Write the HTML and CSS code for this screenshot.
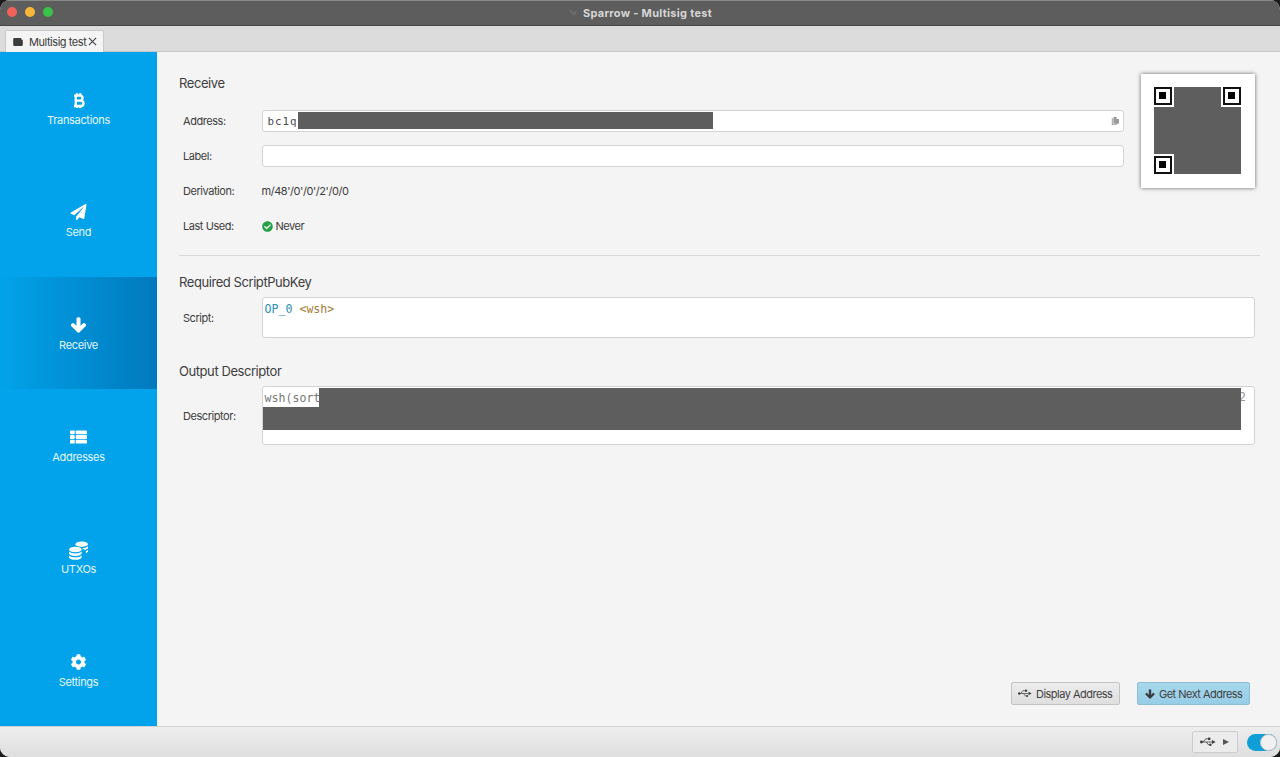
FILE: index.html
```html
<!DOCTYPE html>
<html lang="en">
<head>
<meta charset="utf-8">
<title>Sparrow - Multisig test</title>
<link rel="stylesheet" href="styles.css">
</head>
<body>
<div class="window">
  <header class="titlebar">
    <div class="lights"><span class="light red"></span><span class="light yellow"></span><span class="light green"></span></div>
    <div class="title">
      <svg class="title-icon" viewBox="0 0 12 10"><path d="M0 1l5 2 1 3 5-5-3 8-3-2z"/></svg>
      <span>Sparrow - Multisig test</span>
    </div>
  </header>
  <div class="tabbar">
    <div class="tab">
      <svg class="tab-icon" viewBox="0 0 12 10"><path d="M1.5 0H10v2h.5A1.5 1.5 0 0 1 12 3.500V8.500A1.500 1.500 0 0 1 10.500 10H1.500A1.500 1.500 0 0 1 0 8.500V1.500A1.500 1.500 0 0 1 1.500 0z"/></svg>
      <span>Multisig test</span>
      <svg class="tab-close" viewBox="0 0 10 10"><path d="M1 1l8 8M9 1l-8 8"/></svg>
    </div>
  </div>
  <div class="body">
    <nav class="sidebar">
      <div class="nav-item">
        <svg class="nav-icon" viewBox="1 -0.800 14 16"><path class="btc" d="M3.500 2.800H9.500a2.500 2.500 0 0 1 0 5H5M5 7.800H10.300a2.700 2.700 0 0 1 0 5.400H3.500M5.300 2.800V13.200M6.500 .5V3M9.800 .5V3M6.500 13V15.500M9.800 13V15.500"/></svg>
        <span>Transactions</span>
      </div>
      <div class="nav-item">
        <svg class="nav-icon" viewBox="0 0 512 512"><path d="M476 3.200L12.500 270.600c-18.100 10.400-15.800 35.600 2.200 43.200L121 358.400l287.300-253.200c5.500-4.900 13.300 2.600 8.600 8.300L176 407v80.500c0 23.600 28.500 32.900 42.500 15.800L282 426l124.600 52.200c14.200 6 30.400-2.900 33-18.200l72-432C515 7.800 493.300-6.800 476 3.200z"/></svg>
        <span>Send</span>
      </div>
      <div class="nav-item active">
        <svg class="nav-icon nav-arrow" viewBox="0 0 448 512"><path d="M413.100 222.500l22.200 22.200c9.400 9.400 9.400 24.600 0 33.900L241 473c-9.400 9.400-24.600 9.400-33.900 0L12.700 278.600c-9.400-9.400-9.400-24.600 0-33.900l22.200-22.200c9.500-9.500 25-9.300 34.300.4L184 343.400V56c0-13.300 10.700-24 24-24h32c13.300 0 24 10.700 24 24v287.400l114.800-120.500c9.300-9.800 24.800-10 34.300-.4z"/></svg>
        <span>Receive</span>
      </div>
      <div class="nav-item">
        <svg class="nav-icon" viewBox="0 0 18 16"><rect x="0" y="1" width="5" height="4" rx="1"/><rect x="0" y="6" width="5" height="4" rx="1"/><rect x="0" y="11" width="5" height="4" rx="1"/><rect x="6" y="1" width="12" height="4" rx="1"/><rect x="6" y="6" width="12" height="4" rx="1"/><rect x="6" y="11" width="12" height="4" rx="1"/></svg>
        <span>Addresses</span>
      </div>
      <div class="nav-item">
        <svg class="nav-icon nav-coins" viewBox="0 0 18 18"><ellipse cx="12" cy="3" rx="6" ry="2.600"/><path d="M6.500 5.600c1.500 1 3.500 1.200 5.500 1.200 2.500 0 4.800-.6 6-1.800v1.500c0 .9-1.200 1.700-3 2.200-.7-1.500-3.800-2.700-8.500-2.300zM16 9.600c.9-.3 1.600-.8 2-1.300v1.500c0 .7-.8 1.400-2 1.800z"/><ellipse cx="6" cy="8" rx="6" ry="2.600"/><path d="M0 10c1.200 1.200 3.500 1.900 6 1.900s4.800-.7 6-1.900v1.600c0 1.400-2.700 2.600-6 2.600s-6-1.200-6-2.600zM0 13.700c1.200 1.200 3.500 1.800 6 1.800s4.800-.6 6-1.800v1.600c0 1.400-2.700 2.500-6 2.500s-6-1.100-6-2.500z"/></svg>
        <span>UTXOs</span>
      </div>
      <div class="nav-item">
        <svg class="nav-icon" viewBox="0 0 512 512"><path d="M487.400 315.700l-42.600-24.600c4.300-23.200 4.300-47 0-70.200l42.600-24.600c4.900-2.800 7.100-8.600 5.500-14-11.100-35.600-30-67.800-54.700-94.600-3.800-4.100-10-5.100-14.800-2.300L380.800 110c-17.900-15.400-38.500-27.300-60.800-35.100V25.800c0-5.600-3.900-10.500-9.400-11.700-36.700-8.200-74.300-7.800-109.200 0-5.500 1.200-9.400 6.100-9.400 11.700V75c-22.200 7.900-42.800 19.800-60.800 35.100L88.700 85.500c-4.900-2.800-11-1.900-14.800 2.300-24.700 26.700-43.600 58.900-54.700 94.600-1.700 5.400.6 11.200 5.500 14L67.300 221c-4.300 23.200-4.300 47 0 70.200l-42.600 24.600c-4.900 2.800-7.100 8.600-5.500 14 11.100 35.600 30 67.800 54.700 94.600 3.800 4.100 10 5.100 14.800 2.300l42.600-24.600c17.900 15.400 38.500 27.300 60.800 35.100v49.200c0 5.600 3.900 10.500 9.400 11.700 36.700 8.200 74.300 7.800 109.200 0 5.500-1.200 9.400-6.100 9.400-11.700v-49.200c22.200-7.900 42.800-19.800 60.800-35.100l42.600 24.600c4.900 2.800 11 1.900 14.800-2.300 24.700-26.700 43.600-58.900 54.700-94.600 1.500-5.500-.7-11.300-5.600-14.100zM256 336c-44.100 0-80-35.900-80-80s35.900-80 80-80 80 35.900 80 80-35.900 80-80 80z"/></svg>
        <span>Settings</span>
      </div>
    </nav>
    <main class="content">
      <section class="top">
        <div class="top-form">
          <h2 class="heading">Receive</h2>
          <div class="row">
            <label class="row-label">Address:</label>
            <div class="field mono address">
              <span>bc1q</span>
              <span class="redact redact-address"></span>
              <svg class="copy-icon" viewBox="0 0 10 10"><path d="M3 0H7v2.500h3V8.500H3z"/><path d="M1 1.500h1.200V9H7.500v1H1z"/></svg>
            </div>
          </div>
          <div class="row">
            <label class="row-label">Label:</label>
            <div class="field"></div>
          </div>
          <div class="row">
            <label class="row-label">Derivation:</label>
            <span class="value">m/48'/0'/0'/2'/0/0</span>
          </div>
          <div class="row">
            <label class="row-label">Last Used:</label>
            <span class="value with-icon">
              <svg class="check-icon" viewBox="0 0 512 512"><path d="M504 256c0 136.967-111.033 248-248 248S8 392.967 8 256 119.033 8 256 8s248 111.033 248 248zM227.314 387.314l184-184c6.248-6.248 6.248-16.379 0-22.627l-22.627-22.627c-6.248-6.249-16.379-6.249-22.628 0L216 308.118l-70.059-70.059c-6.248-6.248-16.379-6.248-22.627 0l-22.627 22.627c-6.248 6.248-6.248 16.379 0 22.627l104 104c6.249 6.25 16.379 6.25 22.627.001z"/></svg>
              Never
            </span>
          </div>
        </div>
        <div class="qr">
          <div class="qr-code">
            <span class="finder finder-tl"></span>
            <span class="finder finder-tr"></span>
            <span class="finder finder-bl"></span>
          </div>
        </div>
      </section>
      <hr class="divider">
      <h2 class="heading heading-script">Required ScriptPubKey</h2>
      <div class="code-row">
        <label class="row-label">Script:</label>
        <div class="code-box script-box mono"><span class="op">OP_0</span> <span class="wsh">&lt;wsh&gt;</span></div>
      </div>
      <h2 class="heading heading-desc">Output Descriptor</h2>
      <div class="code-row">
        <label class="row-label">Descriptor:</label>
        <div class="code-box desc-box mono">
          <span class="desc-text">wsh(sort</span>
          <span class="desc-end">2</span>
          <span class="redact redact-desc-a"></span>
          <span class="redact redact-desc-b"></span>
        </div>
      </div>
      <div class="actions">
        <button class="btn btn-display">
          <svg class="usb-icon" viewBox="0 0 20 12"><path d="M0 6h15M4 6l3-4h3M8 6l2.500 3.500H13"/><circle cx="1.800" cy="6" r="1.800" class="solid"/><path d="M15 3.500L19.500 6 15 8.500z" class="solid"/><rect x="10" y="0.500" width="3" height="3" class="solid"/><circle cx="13" cy="9.500" r="1.500" class="solid"/></svg>
          Display Address
        </button>
        <button class="btn btn-primary">
          <svg class="arrow-icon" viewBox="0 0 448 512"><path d="M413.100 222.500l22.200 22.200c9.400 9.400 9.400 24.600 0 33.900L241 473c-9.400 9.400-24.600 9.400-33.900 0L12.700 278.600c-9.400-9.400-9.400-24.600 0-33.900l22.200-22.200c9.500-9.500 25-9.300 34.300.4L184 343.400V56c0-13.300 10.700-24 24-24h32c13.300 0 24 10.700 24 24v287.400l114.800-120.500c9.300-9.800 24.800-10 34.300-.4z"/></svg>
          Get Next Address
        </button>
      </div>
    </main>
  </div>
  <footer class="statusbar">
    <div class="status-device">
      <svg class="usb-icon" viewBox="0 0 20 12"><path d="M0 6h15M4 6l3-4h3M8 6l2.500 3.500H13"/><circle cx="1.800" cy="6" r="1.800" class="solid"/><path d="M15 3.500L19.500 6 15 8.500z" class="solid"/><rect x="10" y="0.500" width="3" height="3" class="solid"/><circle cx="13" cy="9.500" r="1.500" class="solid"/></svg>
      <span class="caret"></span>
    </div>
    <div class="toggle"><span class="knob"></span></div>
  </footer>
</div>
</body>
</html>
```
FILE: styles.css
```css
* { box-sizing: border-box; }
html, body { margin: 0; height: 100%; background: #1c1c1c; overflow: hidden; }
body { font-family: Inter, "Liberation Sans", sans-serif; font-size: 11px; letter-spacing: -.45px; color: #3d3d3d; }
.window { width: 1280px; height: 757px; display: flex; flex-direction: column; border-radius: 10px; overflow: hidden; background: #f4f4f4; }

.titlebar { height: 26px; flex: none; background: #5d5d5d; border-top: 1px solid #8a8a8a; border-bottom: 1px solid #444; display: flex; align-items: center; justify-content: center; position: relative; }
.lights { position: absolute; left: 7px; top: 6px; display: flex; gap: 8px; }
.light { width: 10px; height: 10px; border-radius: 50%; display: block; }
.red { background: #f0615a; }
.yellow { background: #f8b73a; }
.green { background: #3ac24a; }
.title { display: flex; align-items: center; gap: 5px; font-weight: 700; font-size: 11px; color: #d6d6d6; letter-spacing: .3px; margin-top: -1px; }
.title-icon { width: 10px; height: 9px; fill: #6f6f6f; }

.tabbar { height: 26px; flex: none; background: #dcdcdc; border-bottom: 1px solid #c8c8c8; padding: 4px 0 0 5px; display: flex; }
.tab { width: 99px; height: 22px; background: #f4f4f4; border: 1px solid #c9c9c9; border-bottom: 0; border-radius: 2px 2px 0 0; display: flex; align-items: center; padding-left: 7px; color: #3b3b3b; font-size: 11px; white-space: nowrap; }
.tab-icon { width: 10px; height: 8px; fill: #3c3c3c; margin-right: 6px; flex: none; }
.tab-close { width: 9px; height: 9px; stroke: #444; stroke-width: 1.300; fill: none; margin-left: 2px; flex: none; }

.body { flex: 1; display: flex; min-height: 0; }
.sidebar { width: 157px; flex: none; background: #02a3ea; display: grid; grid-template-rows: repeat(6, 1fr); }
.nav-item { display: flex; flex-direction: column; align-items: center; padding-top: 40px; color: #e4f6fe; font-size: 11px; letter-spacing: -.33px; line-height: 13px; gap: 6px; }
.nav-item.active { background: linear-gradient(90deg, #02a3ea 0%, #0179bd 100%); }
.nav-icon { width: 17px; height: 16px; fill: #fff; display: block; }
.nav-arrow { stroke: #fff; stroke-width: 50; }
.nav-coins { width: 19px; height: 19px; margin-bottom: -3px; }
.btc { fill: none; stroke: #fff; stroke-width: 2.400; }

.content { flex: 1; min-width: 0; display: flex; flex-direction: column; padding: 21px 21px 21px 22px; background: #f4f4f4; }
.top { display: flex; gap: 17px; padding-right: 4px; }
.top-form { flex: 1; min-width: 0; }
.heading { margin: 0; font-size: 13px; font-weight: 400; line-height: 20px; color: #3d3d3d; letter-spacing: -.43px; }
.top-form .heading { margin-bottom: 10.500px; }
.row { height: 35px; display: flex; align-items: center; }
.row-label { width: 82.500px; flex: none; padding-left: 4px; font-size: 11px; color: #3d3d3d; }
.value { font-size: 11px; color: #3d3d3d; }
.with-icon { display: flex; align-items: center; gap: 3px; }
.check-icon { width: 11px; height: 11px; fill: #27a04a; }
.field { flex: 1; height: 22px; background: #fff; border: 1px solid #d3d3d3; border-radius: 3px; position: relative; display: flex; align-items: center; padding-left: 5px; }
.mono { font-family: "DejaVu Sans Mono", "Liberation Mono", monospace; font-size: 11.600px; letter-spacing: 0; color: #555; }
.address { font-size: 10.800px; letter-spacing: 1px; color: #4a4a4a; }
.copy-icon { position: absolute; right: 4px; top: 6px; width: 8px; height: 8px; fill: #9a9a9a; }

.redact { position: absolute; background: #5d5e5d; display: block; }
.redact-address { left: 35px; top: 1px; width: 415px; height: 17px; }
.redact-desc-a { left: 56px; top: 1px; width: 922px; height: 19px; }
.redact-desc-b { left: 0; top: 20px; width: 978px; height: 23px; }

.qr { width: 114px; height: 114px; flex: none; background: #fff; box-shadow: 0 0 4px rgba(0,0,0,.6); padding: 13px; margin-top: 1px; }
.qr-code { width: 87px; height: 87px; background: #5d5e5d; position: relative; }
.finder { position: absolute; width: 18px; height: 18px; background: #fff; border: 2.500px solid #111; outline: 2px solid #fff; }
.finder::after { content: ""; position: absolute; left: 3px; top: 3px; width: 7px; height: 7px; background: #000; }
.finder-tl { left: 0; top: 0; }
.finder-tr { right: 0; top: 0; }
.finder-bl { left: 0; bottom: 0; }

.divider { border: 0; border-top: 1px solid #d8d8d8; margin: 11.500px -1px 0 0; width: calc(100% + 1px); }
.heading-script { margin-top: 16px; margin-bottom: 5px; }
.heading-desc { margin-top: 23px; margin-bottom: 5px; }
.code-row { display: flex; align-items: center; padding-right: 4px; }
.code-box { flex: 1; background: #fff; border: 1px solid #d3d3d3; border-radius: 3px; position: relative; padding: 4px 2px; line-height: 14px; }
.script-box { height: 41px; }
.desc-box { height: 59px; overflow: hidden; color: #777; }
.op { color: #2b8fb5; }
.wsh { color: #a67c35; }
.desc-text { display: block; }
.desc-end { position: absolute; right: 8px; top: 3px; color: #999; }

.actions { margin-top: auto; display: flex; justify-content: flex-end; gap: 17px; padding-right: 9px; }
.btn { height: 23px; border: 1px solid #c3c3c3; border-radius: 2px; background: linear-gradient(#ececec, #dfdfdf); font: inherit; font-size: 11px; letter-spacing: -.52px; color: #3f3f3f; display: flex; align-items: center; gap: 4px; padding: 0 6px; white-space: nowrap; }
.btn-display { width: 109px; }
.btn-primary { width: 113px; padding-left: 7px; border-color: #8dbdd6; background: linear-gradient(#a8d8ec, #96cde6); }
.usb-icon { width: 14px; height: 9px; stroke: #3f3f3f; stroke-width: 1; fill: none; flex: none; }
.usb-icon .solid { fill: #3f3f3f; stroke: none; }
.arrow-icon { width: 10px; height: 10px; fill: #333; stroke: #333; stroke-width: 40; flex: none; }

.statusbar { height: 31px; flex: none; background: linear-gradient(#eeeeee, #dedede); border-top: 1px solid #d2d2d2; display: flex; align-items: center; justify-content: flex-end; gap: 9px; padding-right: 3px; }
.status-device { width: 46px; height: 22px; border: 1px solid #cdcdcd; border-radius: 2px; background: #ececec; display: flex; align-items: center; gap: 7px; padding-left: 7px; }
.status-device .usb-icon { width: 16px; height: 10px; }
.caret { width: 0; height: 0; border-left: 6px solid #555; border-top: 3.500px solid transparent; border-bottom: 3.500px solid transparent; }
.toggle { width: 30px; height: 17px; border-radius: 9px; background: #0f9fd6; position: relative; }
.knob { position: absolute; right: 0; top: 0; width: 17px; height: 17px; border-radius: 50%; background: #f1f1f1; border: 1px solid #c4c4c4; }
```
